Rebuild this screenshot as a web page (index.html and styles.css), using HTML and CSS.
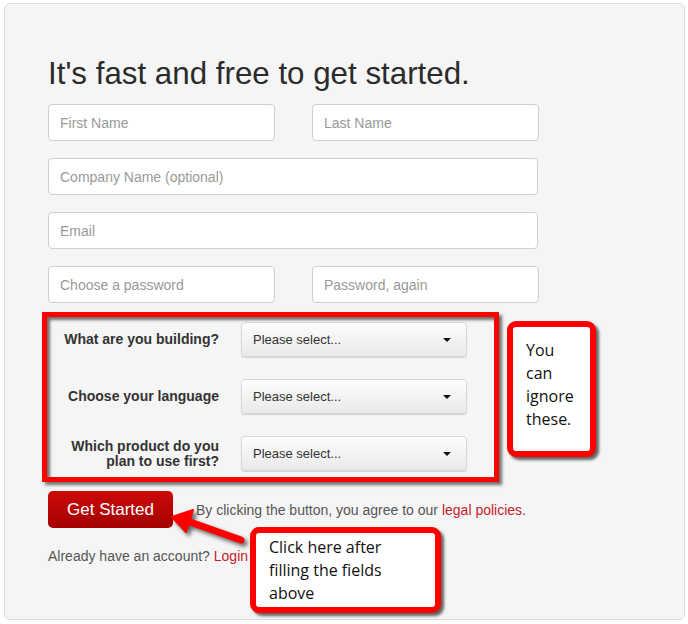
FILE: index.html
```html
<!DOCTYPE html>
<html lang="en">

<head>
    <meta charset="UTF-8">
    <meta name="viewport" content="width=device-width, initial-scale=1.0">
    <title>Sign up</title>
    <link rel="stylesheet" href="styles.css">
</head>

<body>
    <div class="page">
        <div class="panel">
            <h1>It's fast and free to get started.</h1>
            <form class="signup">
                <div class="row">
                    <input type="text" class="half" placeholder="First Name">
                    <input type="text" class="half" placeholder="Last Name">
                </div>
                <div class="row">
                    <input type="text" class="full" placeholder="Company Name (optional)">
                </div>
                <div class="row">
                    <input type="email" class="full" placeholder="Email">
                </div>
                <div class="row">
                    <input type="password" class="half" placeholder="Choose a password">
                    <input type="password" class="half" placeholder="Password, again">
                </div>

                <div class="extra">
                    <div class="extra-row">
                        <label>What are you building?</label>
                        <div class="select">Please select...<span class="caret"></span></div>
                    </div>
                    <div class="extra-row">
                        <label>Choose your language</label>
                        <div class="select">Please select...<span class="caret"></span></div>
                    </div>
                    <div class="extra-row">
                        <label>Which product do you<br>plan to use first?</label>
                        <div class="select">Please select...<span class="caret"></span></div>
                    </div>
                </div>

                <div class="submit-row">
                    <button type="button">Get Started</button>
                    <p class="terms">By clicking the button, you agree to our <a href="#">legal policies</a>.</p>
                </div>
                <p class="login">Already have an account? <a href="#">Login</a></p>
            </form>
        </div>

        <div class="callout callout-ignore">You<br>can<br>ignore<br>these.</div>
        <div class="callout callout-click">Click here after<br>filling the fields<br>above</div>

        <svg class="arrow" width="688" height="624" viewBox="0 0 688 624">
            <line x1="241" y1="540" x2="190" y2="522" stroke="#f00" stroke-width="7" stroke-linecap="round"/>
            <polygon points="172,517 193,510 186,532" fill="#f00" stroke="#f00" stroke-width="2" stroke-linejoin="round"/>
        </svg>
    </div>
</body>

</html>
```

FILE: styles.css
```css
body {
    margin: 0;
    background: #ffffff;
    font-family: 'Liberation Sans', Arial, sans-serif;
    color: #333;
}

.page {
    position: relative;
    width: 688px;
    height: 624px;
    overflow: hidden;
}

.panel {
    margin: 3px 0 0 4px;
    width: 681px;
    height: 617px;
    box-sizing: border-box;
    padding: 52px 0 0 43px;
    background: #f5f5f5;
    border: 1px solid #dcdcdc;
    border-radius: 6px;
}

h1 {
    margin: 0 0 12px;
    font-size: 31.3px;
    line-height: 36px;
    font-weight: normal;
    color: #2b2b2b;
}

.row {
    display: flex;
    gap: 37px;
    margin-bottom: 17px;
}

input {
    height: 37px;
    box-sizing: border-box;
    padding: 0 11px;
    border: 1px solid #cfcfcf;
    border-radius: 4px;
    background: #ffffff;
    font-family: 'Liberation Sans', Arial, sans-serif;
    font-size: 14px;
    color: #333;
}

input::placeholder {
    color: #999;
}

.half {
    width: 227px;
}

.full {
    width: 490px;
}

.extra {
    margin: -8px 0 0 -6px;
    width: 457px;
    height: 170px;
    box-sizing: border-box;
    padding: 5px 0 0;
    border: 5px solid #ff0000;
    box-shadow: 3px 3px 3px rgba(0, 0, 0, 0.55), inset 3px 3px 3px rgba(0, 0, 0, 0.55);
    display: flex;
    flex-direction: column;
    gap: 22px;
}

.extra-row {
    display: flex;
    align-items: center;
    gap: 22px;
}

.extra-row label {
    width: 172px;
    text-align: right;
    font-weight: bold;
    font-size: 14px;
    line-height: 15px;
    color: #333;
}

.select {
    position: relative;
    width: 226px;
    height: 35px;
    box-sizing: border-box;
    padding: 0 11px;
    line-height: 33px;
    font-size: 13px;
    color: #333;
    border: 1px solid #d8d8d8;
    border-radius: 4px;
    background: linear-gradient(#fdfdfd, #e9e9e9);
    box-shadow: 0 1px 1px rgba(0, 0, 0, 0.15);
}

.caret {
    position: absolute;
    right: 15px;
    top: 15px;
    border-left: 4px solid transparent;
    border-right: 4px solid transparent;
    border-top: 4px solid #111;
}

.submit-row {
    display: flex;
    align-items: center;
    gap: 23px;
    margin-top: 9px;
}

button {
    width: 125px;
    height: 37px;
    border: none;
    border-radius: 5px;
    background: linear-gradient(#cc0a0a, #a40000);
    color: #ffffff;
    font-family: 'Liberation Sans', Arial, sans-serif;
    font-size: 17px;
    cursor: pointer;
}

.terms,
.login {
    margin: 0;
    font-size: 14px;
    line-height: 16px;
    color: #555;
}

.login {
    margin-top: 20px;
}

a {
    color: #c8202a;
    text-decoration: none;
}

.callout {
    position: absolute;
    box-sizing: border-box;
    background: #ffffff;
    border: 6px solid #ff0000;
    border-radius: 9px;
    box-shadow: 3px 3px 3px rgba(0, 0, 0, 0.6);
    font-family: 'Open Sans', 'Noto Sans', sans-serif;
    font-size: 16px;
    line-height: 23px;
    color: #111;
}

.callout-ignore {
    left: 507px;
    top: 321px;
    width: 89px;
    height: 136px;
    padding: 12px 0 0 13px;
}

.callout-click {
    left: 250px;
    top: 527px;
    width: 191px;
    height: 86px;
    padding: 3px 0 0 13px;
}

.arrow {
    position: absolute;
    left: 0;
    top: 0;
    filter: drop-shadow(3px 3px 2px rgba(0, 0, 0, 0.6));
    pointer-events: none;
}
```
